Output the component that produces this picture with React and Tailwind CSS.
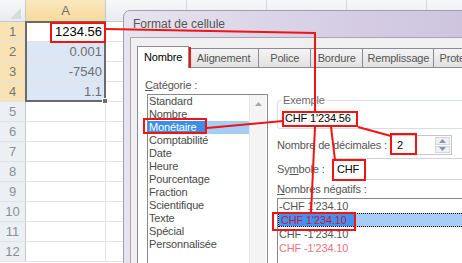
import React from 'react'

const rows = [
  { n: 1, a: '1234.56', sel: true, active: true },
  { n: 2, a: '0.001', sel: true },
  { n: 3, a: '-7540', sel: true },
  { n: 4, a: '1.1', sel: true },
  { n: 5 },
  { n: 6 },
  { n: 7 },
  { n: 8 },
  { n: 9 },
  { n: 10 },
  { n: 11 },
  { n: 12 },
]

const categories = [
  'Standard',
  'Nombre',
  'Monétaire',
  'Comptabilité',
  'Date',
  'Heure',
  'Pourcentage',
  'Fraction',
  'Scientifique',
  'Texte',
  'Spécial',
  'Personnalisée',
]

const tabs = [
  { label: 'Alignement', w: 'w-[73px] justify-center' },
  { label: 'Police', w: 'w-[54px] justify-center' },
  { label: 'Bordure', w: 'w-[54px] justify-center' },
  { label: 'Remplissage', w: 'w-[74px] justify-center' },
  { label: 'Protection', w: 'w-[70px] justify-start pl-[5px]' },
]

function Sheet() {
  return (
    <div className="flex flex-col text-[13px]">
      <div className="flex h-[22px] border-b border-[#c5c9cf] bg-gradient-to-b from-[#f7f8fa] to-[#e8ebef]">
        <div className="w-[26px] border-r border-[#c5c9cf] flex items-end justify-end pr-[4px] pb-[2px]">
          <svg width="11" height="11" viewBox="0 0 11 11">
            <polygon points="11,0 11,11 0,11" fill="#d7dbe0" />
          </svg>
        </div>
        <div className="w-[80px] border-r border-[#c5c9cf] bg-gradient-to-b from-[#fbe8bf] to-[#f6d99b] flex items-center justify-center text-[#6f6f6f]">
          A
        </div>
        <div className="w-[81px] border-r border-[#d3d6db]" />
        <div className="w-[80px] border-r border-[#d3d6db]" />
        <div className="w-[80px] border-r border-[#d3d6db]" />
        <div className="w-[80px] border-r border-[#d3d6db]" />
        <div className="flex-1" />
      </div>
      {rows.map((r) => (
        <div key={r.n} className="flex h-[20px] border-b border-[#e1e3e6]">
          <div
            className={
              r.sel
                ? 'w-[26px] border-r border-[#c5c9cf] bg-[#f9e3b4] flex items-center justify-center text-[#757575]'
                : 'w-[26px] border-r border-[#c5c9cf] bg-[#eceff3] flex items-center justify-center text-[#8a9098]'
            }
          >
            {r.n}
          </div>
          <div
            className={
              r.active
                ? 'w-[80px] border-r border-[#e1e3e6] bg-white flex items-center justify-end pr-[3px] text-black'
                : r.sel
                ? 'w-[80px] border-r border-[#e1e3e6] bg-[#dce7f6] flex items-center justify-end pr-[3px] text-[#6e6e6e]'
                : 'w-[80px] border-r border-[#e1e3e6] bg-white'
            }
          >
            {r.a}
          </div>
          <div className="w-[81px] border-r border-[#e1e3e6]" />
          <div className="flex-1" />
        </div>
      ))}
    </div>
  )
}

function Spinner() {
  return (
    <div className="w-[62px] h-[20px] border border-[#c3c6cc] flex bg-white">
      <div className="flex-1 flex items-center pl-[6px] text-black">2</div>
      <div className="w-[17px] flex flex-col p-[1px] gap-[1px]">
        <div className="flex-1 bg-[#eef0f3] border border-[#d3d6db] flex items-center justify-center">
          <svg width="7" height="4" viewBox="0 0 7 4">
            <polygon points="0,4 7,4 3.5,0" fill="#8796ad" />
          </svg>
        </div>
        <div className="flex-1 bg-[#eef0f3] border border-[#d3d6db] flex items-center justify-center">
          <svg width="7" height="4" viewBox="0 0 7 4">
            <polygon points="0,0 7,0 3.5,4" fill="#8796ad" />
          </svg>
        </div>
      </div>
    </div>
  )
}

function Dialog() {
  return (
    <div className="absolute left-[123px] top-[10px] w-[380px] h-[300px] rounded-t-[7px] border border-[#a19cae] bg-gradient-to-r from-[#e8e4ee] via-[#d8d0e6] to-[#cbc1dd] pl-[6px] flex flex-col">
      <div className="h-[26px] flex items-center pl-[3px] text-[12px] text-[#555]">Format de cellule</div>
      <div className="flex-1 border-l border-t border-[#aaa4b6] bg-[#f0f0f0] pl-[6px] pt-[8px] flex flex-col text-[11px] tracking-[-0.15px] text-[#444] whitespace-nowrap">
        <div className="flex items-end h-[21px]">
          <div className="relative z-10 -mb-px h-[22px] w-[54px] bg-white border border-b-0 border-[#898c95] flex items-center justify-center pb-[1px] text-black">
            Nombre
          </div>
          {tabs.map((t) => (
            <div
              key={t.label}
              className={`${t.w} h-[19px] border border-l-0 border-b-0 border-[#898c95] bg-gradient-to-b from-[#f4f4f4] to-[#e2e2e2] flex items-center text-[#555]`}
            >
              {t.label}
            </div>
          ))}
        </div>
        <div className="flex-1 bg-white border-l border-t border-[#898c95] flex">
          <div className="w-[139px] pl-[7px] flex flex-col">
            <div className="mt-[10px] h-[14px] leading-[14px] text-[#555]">
              <span className="underline">C</span>atégorie :
            </div>
            <div className="ml-[2px] mt-[2px] w-[121px] h-[190px] border border-[#828790] flex">
              <div className="w-[101px] flex flex-col">
                {categories.map((c) =>
                  c === 'Monétaire' ? (
                    <div key={c} className="h-[13px] leading-[13px] flex bg-[#a6cdf6]">
                      <span className="w-[57px] pl-[1px] bg-[#3d8fe6] text-white">{c}</span>
                    </div>
                  ) : (
                    <div key={c} className="h-[13px] leading-[13px] pl-[1px] text-[#4a4a4a]">
                      {c}
                    </div>
                  )
                )}
              </div>
              <div className="w-[17px] bg-[#f4f4f4] border-l border-[#e6e6e6] flex flex-col">
                <div className="h-[17px] flex items-center justify-center">
                  <svg width="7" height="4" viewBox="0 0 7 4">
                    <polygon points="0,4 7,4 3.5,0" fill="#a8a8a8" />
                  </svg>
                </div>
              </div>
            </div>
          </div>
          <div className="flex-1 flex flex-col">
            <fieldset className="mt-[25px] w-[200px] border border-[#d5dfe5] rounded-[3px] pt-[2px]">
              <legend className="ml-[4px] px-[1px] leading-[14px] text-[#6a6a6a]">Exemple</legend>
              <div className="h-[19px] flex items-center pl-[7px] text-black">CHF 1'234.56</div>
            </fieldset>
            <div className="mt-[6px] h-[20px] flex items-center">
              <div className="w-[113px] text-[#555]">Nombre de décimales :</div>
              <Spinner />
            </div>
            <div className="mt-[3px] h-[22px] flex items-center">
              <div className="w-[55px] text-[#555]">
                Sy<span className="underline">m</span>bole :
              </div>
              <div className="flex-1 h-full border border-r-0 border-[#d3d3d3] flex items-center pl-[4px] text-black">
                CHF
              </div>
            </div>
            <div className="mt-[2px] h-[14px] leading-[14px] text-[#555]">
              <span className="underline">N</span>ombres négatifs :
            </div>
            <div className="mt-[2px] h-[100px] border border-r-0 border-[#828790] flex flex-col">
              <div className="h-[14px] leading-[14px] pl-[1px] text-[#555]">-CHF 1'234.10</div>
              <div className="h-[14px] leading-[12px] flex bg-[#a6cdf6] border border-dotted border-black">
                <span className="w-[76px] pl-[2px] bg-[#3d93ee] text-[#d4103a]">CHF 1'234.10</span>
              </div>
              <div className="h-[14px] leading-[14px] pl-[1px] text-[#555]">CHF -1'234.10</div>
              <div className="h-[14px] leading-[14px] pl-[1px] text-[#f2707f]">CHF -1'234.10</div>
            </div>
          </div>
        </div>
      </div>
    </div>
  )
}

function Annotations() {
  const red = '#f01414'
  return (
    <svg className="absolute inset-0 pointer-events-none" width="462" height="263" viewBox="0 0 462 263">
      <g fill="none" stroke={red} strokeWidth="2">
        <rect x="51" y="23" width="54" height="19" />
        <rect x="139" y="48" width="51" height="19" />
        <rect x="144" y="119" width="62" height="14" />
        <rect x="283" y="112" width="74" height="14" />
        <rect x="391" y="134" width="25" height="20" />
        <rect x="333" y="160" width="32" height="20" />
        <rect x="273" y="213" width="82" height="17" />
        <polyline points="106,29 315,33 315,112" />
        <line x1="207" y1="128" x2="283" y2="121" />
        <line x1="358" y1="127" x2="391" y2="136" />
        <line x1="315" y1="127" x2="311" y2="213" />
        <line x1="331" y1="127" x2="335" y2="160" />
      </g>
    </svg>
  )
}

export default function App() {
  return (
    <div className="relative w-[462px] h-[263px] overflow-hidden bg-white font-['Liberation_Sans',Arial,sans-serif]">
      <Sheet />
      <div className="absolute left-[25px] top-[21px] w-[81px] h-[81px] border-2 border-[#6a6a6a]" />
      <div className="absolute left-[102px] top-[98px] w-[6px] h-[6px] bg-[#6a6a6a] border border-white" />
      <Dialog />
      <Annotations />
    </div>
  )
}
